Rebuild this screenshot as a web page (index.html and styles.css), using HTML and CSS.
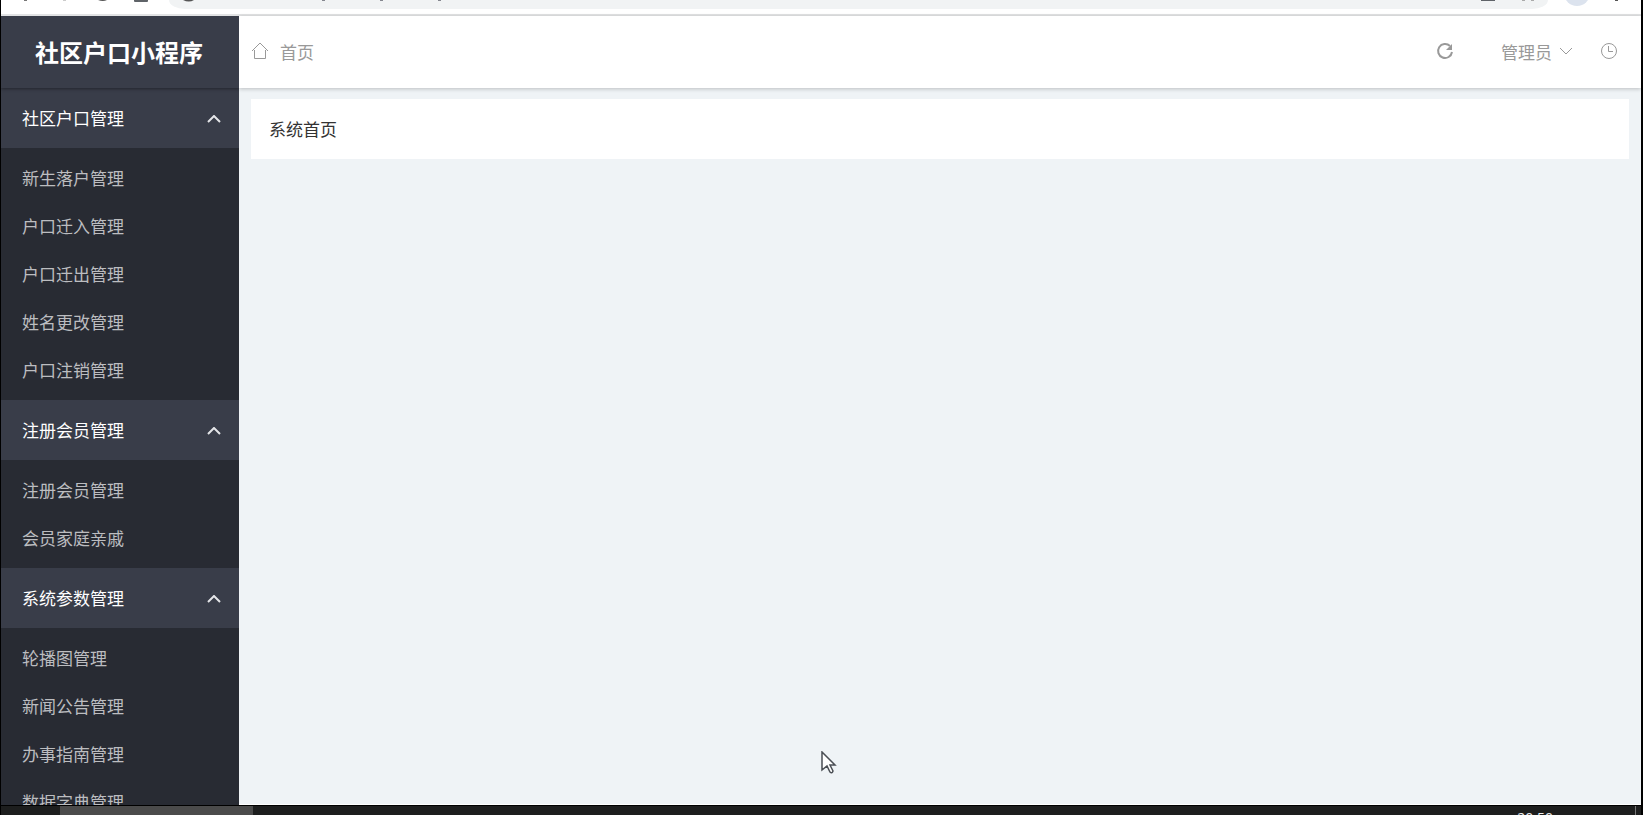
FILE: index.html
```
<!DOCTYPE html>
<html lang="zh-CN">
<head>
<meta charset="utf-8">
<title>社区户口小程序</title>
<link rel="stylesheet" href="styles.css">
</head>
<body>
<div class="screen">
  <div class="browser-bar">
    <svg class="browser-nav" viewBox="0 0 168 16" aria-hidden="true">
      <path d="M23 0h3v1h-3z" fill="#777"/><path d="M62 0h3v1h-3z" fill="#ccc"/>
      <path d="M97 0q5 2 9 0z" fill="#555"/><rect x="133" y="-5" width="14" height="7" rx="1" fill="#5f6368"/>
    </svg>
    <div class="address">
      <svg width="300" height="9" viewBox="0 0 300 9" aria-hidden="true">
        <path d="M14 0q6 3 11 0z" fill="#555"/>
        <path d="M153 0h3v1h-3zM211 0h3v1h-3zM269 0h3v1h-3z" fill="#85878f"/>
      </svg>
      <svg width="80" height="9" viewBox="0 0 80 9" aria-hidden="true">
        <path d="M13 0h14v1H13z" fill="#5f6368"/><path d="M54 0h3v1h-3zM63 0h3v1h-3z" fill="#aaa"/>
      </svg>
    </div>
    <svg class="browser-profile" viewBox="0 0 93 16" aria-hidden="true">
      <circle cx="29" cy="-7" r="13" fill="#dce3ee"/><path d="M67 0h3v1h-3z" fill="#555"/>
    </svg>
  </div>
  <div class="app">
    <aside class="sidebar">
      <h1 class="brand">社区户口小程序</h1>
      <nav class="menu">
        <button class="group" type="button" aria-expanded="true">社区户口管理<svg class="caret" viewBox="0 0 14 8"><path d="M1 7 7 1l6 6"/></svg></button>
        <ul class="items">
          <li><a href="#">新生落户管理</a></li>
          <li><a href="#">户口迁入管理</a></li>
          <li><a href="#">户口迁出管理</a></li>
          <li><a href="#">姓名更改管理</a></li>
          <li><a href="#">户口注销管理</a></li>
        </ul>
        <button class="group" type="button" aria-expanded="true">注册会员管理<svg class="caret" viewBox="0 0 14 8"><path d="M1 7 7 1l6 6"/></svg></button>
        <ul class="items">
          <li><a href="#">注册会员管理</a></li>
          <li><a href="#">会员家庭亲戚</a></li>
        </ul>
        <button class="group" type="button" aria-expanded="true">系统参数管理<svg class="caret" viewBox="0 0 14 8"><path d="M1 7 7 1l6 6"/></svg></button>
        <ul class="items">
          <li><a href="#">轮播图管理</a></li>
          <li><a href="#">新闻公告管理</a></li>
          <li><a href="#">办事指南管理</a></li>
          <li><a href="#">数据字典管理</a></li>
        </ul>
      </nav>
    </aside>
    <div class="content">
      <header class="topbar">
        <a class="home" href="#">
          <svg class="icon" viewBox="0 0 18 18"><path d="M1 9 9 1l8 8M3.500 8v8.500h11V8"/></svg>首页
        </a>
        <div class="tools">
          <button class="tool" type="button" aria-label="刷新"><svg class="icon refresh" viewBox="0 0 18 18"><path d="M14 4a7 7 0 1 0 2 6"/><path class="tip" d="M16 2v6h-6z"/></svg></button>
          <button class="tool user" type="button">管理员<svg class="down" viewBox="0 0 14 8"><path d="M1 1l6 6 6-6"/></svg></button>
          <button class="tool" type="button" aria-label="时间"><svg class="icon" viewBox="0 0 18 18"><circle cx="9" cy="9" r="7.500"/><path d="M8.500 4v5.500H13"/></svg></button>
        </div>
      </header>
      <main class="page">
        <section class="card">系统首页</section>
      </main>
    </div>
  </div>
  <footer class="taskbar">
    <div class="task"></div>
    <time class="clock">20:50</time>
  </footer>
  <svg class="cursor" viewBox="0 0 16 24" aria-hidden="true"><path d="M1 1v18l5-4 3 6q2 2 3-1l-3-6h5z"/></svg>
</div>
</body>
</html>
```
FILE: styles.css
```
* { box-sizing: border-box; }
body { margin: 0; }
button { border: 0; background: none; padding: 0; font: inherit; color: inherit; }
a { color: inherit; text-decoration: none; }
svg { display: block; fill: none; }

.screen {
  position: relative;
  display: flex;
  flex-direction: column;
  height: 100vh;
  overflow: hidden;
  background: #000;
  border-left: 1px solid #000;
  border-right: 2px solid #000;
  font-family: "Noto Sans CJK SC", sans-serif;
  font-size: 16px;
}

.browser-bar {
  display: flex;
  flex: none;
  height: 16px;
  background: #fff;
  border-bottom: 2px solid #e2e3e4;
}
.browser-nav { width: 168px; height: 16px; }
.browser-profile { width: 93px; height: 16px; }
.address {
  display: flex;
  flex: 1;
  justify-content: space-between;
  height: 9px;
  background: #f1f3f4;
  border-radius: 0 0 16px 16px / 0 0 9px 9px;
}

.app {
  display: flex;
  flex: 1;
  min-height: 0;
  background: #eff3f6;
}
.sidebar {
  flex: none;
  width: 238px;
  overflow: hidden;
  background: #282b33;
  color: #fff;
}
.brand {
  display: flex;
  align-items: center;
  justify-content: center;
  height: 72px;
  margin: 0;
  padding-right: 2px;
  background: #393d49;
  box-shadow: 0 1px 3px rgba(0, 0, 0, .4);
  position: relative;
  font-size: 24px;
  line-height: 32px;
}
.group {
  display: flex;
  align-items: center;
  justify-content: space-between;
  width: 100%;
  height: 60px;
  padding: 0 18px 2px 21px;
  background: #393d49;
  font-size: 17px;
}
.caret { width: 14px; height: 8px; margin-top: 4px; stroke: #e4e5e8; stroke-width: 2; }
.items {
  margin: 0;
  padding: 6px 0;
  list-style: none;
  color: #bcbdc0;
  font-size: 17px;
}
.items a { display: block; padding: 0 21px; line-height: 48px; }

.content { flex: 1; min-width: 0; border-bottom: 1px solid #fff; }
.topbar {
  display: flex;
  align-items: center;
  justify-content: space-between;
  height: 72px;
  padding: 0 23px 2px 12px;
  background: #fff;
  box-shadow: 0 1px 4px rgba(0, 0, 0, .22);
  color: #999;
  font-size: 17px;
}
.home { display: flex; align-items: center; gap: 11px; }
.icon { width: 18px; height: 18px; stroke: #999; stroke-width: 1; }
.refresh { stroke-width: 2; }
.tip { fill: #999; stroke: none; }
.tools { display: flex; align-items: center; }
.tool { display: flex; align-items: center; }
.user { gap: 7px; margin: 0 27px 0 47px; }
.down { width: 14px; height: 8px; stroke: #999; stroke-width: 1; }

.page { padding: 11px 12px; }
.card {
  padding: 18px;
  background: #fff;
  color: #333;
  font-size: 17px;
  line-height: 24px;
}

.taskbar {
  display: flex;
  flex: none;
  justify-content: space-between;
  height: 10px;
  overflow: hidden;
  background: #1d1e1e;
  border-top: 1px solid #000;
}
.task { width: 193px; margin-left: 59px; background: #4b4b4b; }
.clock {
  padding: 2px 82px 0 0;
  margin-right: 5px;
  border-right: 1px solid #777;
  color: #eee;
  font-family: "Open Sans", sans-serif;
  font-size: 14px;
  line-height: 20px;
}

.cursor {
  position: absolute;
  left: 50%;
  top: 751px;
  width: 16px;
  height: 24px;
}
.cursor path { fill: #fff; stroke: #4b4f55; stroke-width: 1.5; }
```
